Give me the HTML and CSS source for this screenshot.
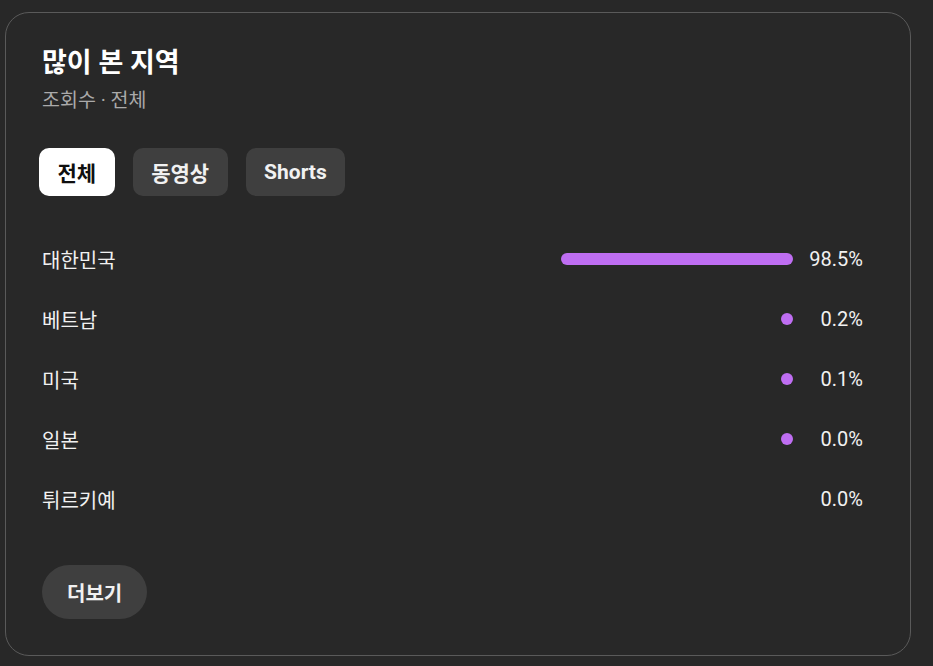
FILE: index.html
```html
<!DOCTYPE html>
<html lang="ko">
<head>
<meta charset="utf-8">
<link rel="stylesheet" href="styles.css">
</head>
<body>
<div class="card">
  <h2 class="title">많이 본 지역</h2>
  <div class="subtitle">조회수 · 전체</div>
  <div class="chips">
    <button class="chip active">전체</button>
    <button class="chip">동영상</button>
    <button class="chip">Shorts</button>
  </div>
  <div class="rows">
    <div class="row"><span class="label">대한민국</span><span class="track"><span class="bar" style="width:98.5%"></span></span><span class="pct">98.5%</span></div>
    <div class="row"><span class="label">베트남</span><span class="track"><span class="bar dot"></span></span><span class="pct">0.2%</span></div>
    <div class="row"><span class="label">미국</span><span class="track"><span class="bar dot"></span></span><span class="pct">0.1%</span></div>
    <div class="row"><span class="label">일본</span><span class="track"><span class="bar dot"></span></span><span class="pct">0.0%</span></div>
    <div class="row"><span class="label">튀르키예</span><span class="track"></span><span class="pct">0.0%</span></div>
  </div>
  <button class="more">더보기</button>
</div>
</body>
</html>
```
FILE: styles.css
```css
* { box-sizing: border-box; }
html, body { margin: 0; padding: 0; background: #282828; }
body {
  font-family: Roboto, "Noto Sans CJK KR", sans-serif;
  color: #f1f1f1;
}
.card {
  margin: 12px 0 0 5px;
  width: 906px;
  height: 644px;
  border: 1px solid #5a5a5a;
  border-radius: 24px;
  padding: 34px 47px 0 36px;
}
.title {
  margin: 0;
  font-size: 27px;
  line-height: 32px;
  font-weight: 700;
  color: #fff;
}
.subtitle {
  margin-top: 10px;
  font-size: 19.5px;
  line-height: 24px;
  color: #aaaaaa;
}
.chips {
  display: flex;
  gap: 18px;
  margin: 35px 0 0 -3px;
}
.chip {
  font-family: inherit;
  border: none;
  height: 48px;
  padding: 0 18.5px;
  border-radius: 10px;
  background: #3f3f3f;
  color: #f1f1f1;
  font-size: 21px;
  font-weight: 700;
}
.chip.active { background: #fff; color: #0f0f0f; }
.rows { margin-top: 33px; }
.row {
  display: flex;
  align-items: center;
  height: 60px;
  font-size: 20px;
}
.label { flex: 1; }
.track {
  width: 236px;
  display: flex;
  justify-content: flex-end;
}
.bar {
  height: 12px;
  min-width: 12px;
  border-radius: 6px;
  background: #bf6ef2;
}
.dot { width: 12px; }
.pct {
  width: 70px;
  text-align: right;
}
.more {
  margin-top: 36px;
  font-family: inherit;
  border: none;
  height: 54px;
  padding: 0 25px;
  border-radius: 27px;
  background: #3f3f3f;
  color: #f1f1f1;
  font-size: 20px;
  font-weight: 700;
}
```
